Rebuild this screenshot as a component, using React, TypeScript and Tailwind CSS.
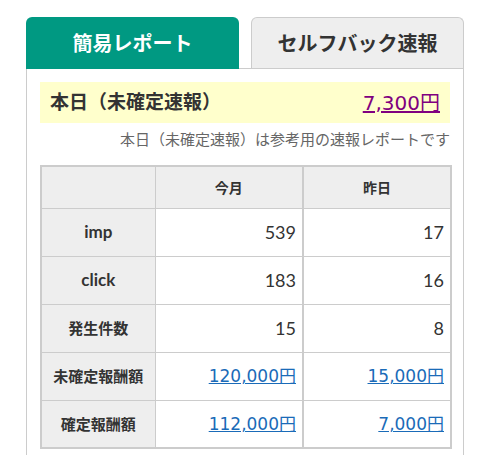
import React from 'react'

const font = { fontFamily: 'Lato, "Noto Sans CJK JP", sans-serif' }
const linkFont = { fontFamily: '"DejaVu Sans", "Noto Sans CJK JP", sans-serif' }

const rows = [
  { label: 'imp', month: '539', yesterday: '17', link: false, latin: true },
  { label: 'click', month: '183', yesterday: '16', link: false, latin: true },
  { label: '発生件数', month: '15', yesterday: '8', link: false, latin: false },
  { label: '未確定報酬額', month: '120,000円', yesterday: '15,000円', link: true, latin: false },
  { label: '確定報酬額', month: '112,000円', yesterday: '7,000円', link: true, latin: false },
]

function Value({ text, link }: { text: string; link: boolean }) {
  if (!link) return <>{text}</>
  return (
    <a href="#" className="text-[17px] text-[#1a6bb8] underline" style={linkFont}>
      {text}
    </a>
  )
}

export default function App() {
  return (
    <div className="min-h-[455px] bg-white pt-[17px] pl-[26px] text-[#333]" style={font}>
      <div className="w-[438px]">
        {/* Tabs */}
        <div className="flex items-end gap-[12px]">
          <div className="relative z-10 -mb-px flex h-[52px] w-[213px] items-center justify-center rounded-t-[6px] bg-[#009982] pb-px text-[20px] font-bold text-white">
            簡易レポート
          </div>
          <div className="flex h-[51px] flex-1 items-center justify-center rounded-t-[6px] border border-b-0 border-[#ccc] bg-[#eee] text-[20px] font-bold text-[#333]">
            セルフバック速報
          </div>
        </div>

        {/* Panel */}
        <div className="border border-[#ccc] px-[13px] pt-[13px] pb-[20px]">
          <div className="flex h-[41px] items-center justify-between bg-[#ffffcc] pl-[10px] pr-[10px]">
            <span className="text-[19px] font-bold text-[#333]">本日（未確定速報）</span>
            <a href="#" className="text-[20px] text-[#800080] underline" style={linkFont}>
              7,300円
            </a>
          </div>
          <p className="mt-[5px] text-right text-[15px] leading-[22px] text-[#666]">
            本日（未確定速報）は参考用の速報レポートです
          </p>

          <table className="mt-[15px] w-[410px] table-fixed border-collapse border-2 border-[#ccc]">
            <colgroup>
              <col className="w-[114px]" />
              <col className="w-[148px]" />
              <col className="w-[148px]" />
            </colgroup>
            <thead>
              <tr className="h-[42px] bg-[#eee]">
                <th className="border border-[#ccc]" />
                <th className="border border-r-2 border-[#ccc] text-[14px] font-bold">今月</th>
                <th className="border border-[#ccc] text-[14px] font-bold">昨日</th>
              </tr>
            </thead>
            <tbody>
              {rows.map((r) => (
                <tr key={r.label} className="h-[48px]">
                  <td
                    className={`border border-[#ccc] bg-[#eee] text-center font-bold ${
                      r.latin ? 'text-[17px]' : 'text-[15px]'
                    }`}
                  >
                    {r.label}
                  </td>
                  <td className="border border-r-2 border-[#ccc] pr-[6px] text-right text-[18px]">
                    <Value text={r.month} link={r.link} />
                  </td>
                  <td className="border border-[#ccc] pr-[6px] text-right text-[18px]">
                    <Value text={r.yesterday} link={r.link} />
                  </td>
                </tr>
              ))}
            </tbody>
          </table>
        </div>
      </div>
    </div>
  )
}
